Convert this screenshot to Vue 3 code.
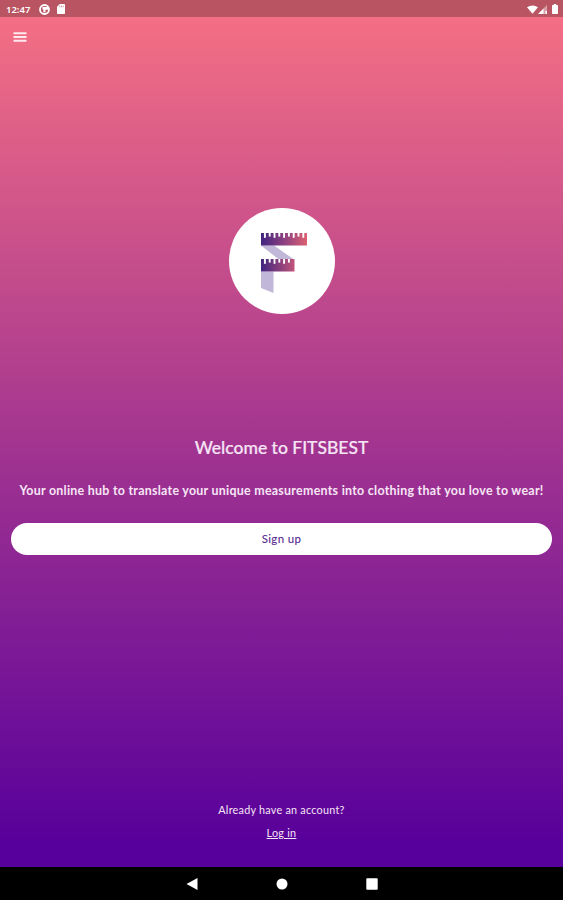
<template>
  <div class="screen">
    <header class="status-bar">
      <div class="status-group">
        <span class="clock">12:47</span>
        <svg class="app-icon" width="11" height="11" viewBox="0 0 11 11">
          <circle cx="5.5" cy="5.5" r="4.5" fill="none" stroke="#fff" stroke-width="1.8" />
          <path d="M3.5 3H9.5V5.8H6.5V8.3H4.4V5.5H3.5Z" fill="#fff" />
        </svg>
        <svg width="8" height="10" viewBox="0 0 8 10">
          <path d="M2.8 0H7.2Q8 0 8 .8V9.2Q8 10 7.2 10H.8Q0 10 0 9.2V2.8Z" fill="#fff" />
          <path d="M2.8 1.6V3.3M4.5 1.6V3.3M6.2 1.6V3.3" stroke="#b95563" stroke-width=".6" />
        </svg>
      </div>
      <div class="status-group">
        <svg width="11" height="9" viewBox="0 0 12 9">
          <path d="M0 2Q6-2 12 2L6 9Z" fill="#fff" />
        </svg>
        <svg width="9" height="9" viewBox="0 0 9 9">
          <path d="M9 0V9H0Z" fill="#fff" fill-opacity=".45" />
          <path d="M5.5 3.5V9H0ZM7.5 6H9V9H7.5Z" fill="#fff" />
        </svg>
        <svg class="battery" width="6" height="10" viewBox="0 0 6 10">
          <path d="M1.8 0H4.2V1H5.3Q6 1 6 1.7V9.3Q6 10 5.3 10H.7Q0 10 0 9.3V1.7Q0 1 .7 1H1.8Z" fill="#fff" />
        </svg>
      </div>
    </header>

    <main class="content">
      <button class="menu" aria-label="Menu">
        <svg width="14" height="10" viewBox="0 0 14 10">
          <path d="M.5 1.2H13.5M.5 5H13.5M.5 8.8H13.5" stroke="#fff" stroke-opacity=".85" stroke-width="1.9" />
        </svg>
      </button>

      <div class="logo">
        <svg width="46" height="60" viewBox="0 0 46 60">
          <defs>
            <linearGradient id="tape" gradientUnits="userSpaceOnUse" x1="0" y1="0" x2="46" y2="0">
              <stop offset="0" stop-color="#40247f" />
              <stop offset=".5" stop-color="#8c4080" />
              <stop offset="1" stop-color="#dc6072" />
            </linearGradient>
            <linearGradient id="tapeShort" gradientUnits="userSpaceOnUse" x1="0" y1="0" x2="34" y2="0">
              <stop offset="0" stop-color="#40247f" />
              <stop offset="1" stop-color="#c3567a" />
            </linearGradient>
          </defs>
          <path d="M0 12.5H13L33 26.5H18ZM0 38.5H12.5V60L0 55Z" fill="#c1b7d8" />
          <path d="M0 0H46V12.5H0Z" fill="url(#tape)" />
          <path d="M0 26H33.5V38.5H0Z" fill="url(#tapeShort)" />
          <path
            v-for="tick in ticks"
            :key="tick.x + '-' + tick.y"
            :d="`M${tick.x} ${tick.y}v${tick.h}`"
            stroke="#fff"
            stroke-width="1.9"
          />
        </svg>
      </div>

      <h1>Welcome to FITSBEST</h1>
      <p class="tagline">Your online hub to translate your unique measurements into clothing that you love to wear!</p>
      <button class="signup">Sign up</button>

      <div class="account">
        <p>Already have an account?</p>
        <a href="#">Log in</a>
      </div>
    </main>

    <nav class="nav-bar">
      <svg width="12" height="12" viewBox="0 0 12 12"><path d="M11.5 0V12L.5 6Z" fill="#fff" /></svg>
      <svg width="12" height="12" viewBox="0 0 12 12"><circle cx="6" cy="6" r="5.5" fill="#fff" /></svg>
      <svg width="12" height="12" viewBox="0 0 12 12"><rect x=".3" y=".3" width="11.4" height="11.4" rx=".8" fill="#fff" /></svg>
    </nav>
  </div>
</template>

<script setup>
// notches along the upper edge of each measuring tape
const row = (count, y) =>
  Array.from({ length: count }, (_, i) => ({ x: 3.9 + i * 4.8, y, h: i % 2 ? 3.6 : 4.8 }))

const ticks = [...row(9, 0), ...row(6, 26)]
</script>

<style>
body {
  background: #000;
}
</style>

<style scoped>
.screen {
  height: 900px;
  display: flex;
  flex-direction: column;
  overflow: hidden;
  font-family: Lato, "Noto Sans", sans-serif;
  color: #f6e5f5;
}

.status-bar {
  height: 17px;
  flex-shrink: 0;
  display: flex;
  justify-content: space-between;
  box-sizing: border-box;
  padding: 0 5px 0 6px;
  background: #b95563;
}

.status-group {
  display: flex;
  align-items: center;
  height: 18px;
}

.clock {
  width: 33px;
  font-family: "Noto Sans", sans-serif;
  font-size: 9.5px;
  font-weight: 600;
  color: #fff;
}

.app-icon {
  margin-right: 7px;
}

.battery {
  margin-left: 5px;
}

.content {
  flex: 1;
  display: flex;
  flex-direction: column;
  align-items: center;
  padding: 0 11px;
  background: linear-gradient(#f46f84 0%, #a33590 50%, #58009b 97%);
}

.menu {
  align-self: flex-start;
  display: flex;
  margin: 15px 0 0 2px;
  padding: 0;
  border: 0;
  background: none;
}

.logo {
  width: 106px;
  height: 106px;
  margin-top: 166px;
  display: flex;
  box-sizing: border-box;
  padding: 25px 0 0 32px;
  border-radius: 50%;
  background: #fff;
}

h1 {
  margin: 122px 0 0;
  font-size: 17.5px;
  line-height: 24px;
  font-weight: 500;
  -webkit-text-stroke: 0.2px currentColor;
  white-space: nowrap;
}

.tagline {
  margin: 22px 0 0;
  font-size: 12.4px;
  line-height: 18px;
  font-weight: 700;
  letter-spacing: 0.28px;
  white-space: nowrap;
}

.signup {
  width: 541px;
  height: 32px;
  margin-top: 23px;
  padding: 0 0 2px;
  border: 0;
  border-radius: 16px;
  background: #fff;
  color: #572b91;
  font-family: inherit;
  font-size: 11.5px;
  font-weight: 500;
  letter-spacing: 0.35px;
}

.account {
  margin-top: auto;
  padding-bottom: 26px;
  display: flex;
  flex-direction: column;
  align-items: center;
  gap: 7px;
  font-size: 10.8px;
  line-height: 16px;
  letter-spacing: 0.25px;
}

.account p {
  margin: 0;
}

.account a {
  color: inherit;
}

.nav-bar {
  height: 33px;
  flex-shrink: 0;
  display: flex;
  justify-content: center;
  align-items: center;
  gap: 78px;
  background: #000;
}
</style>
